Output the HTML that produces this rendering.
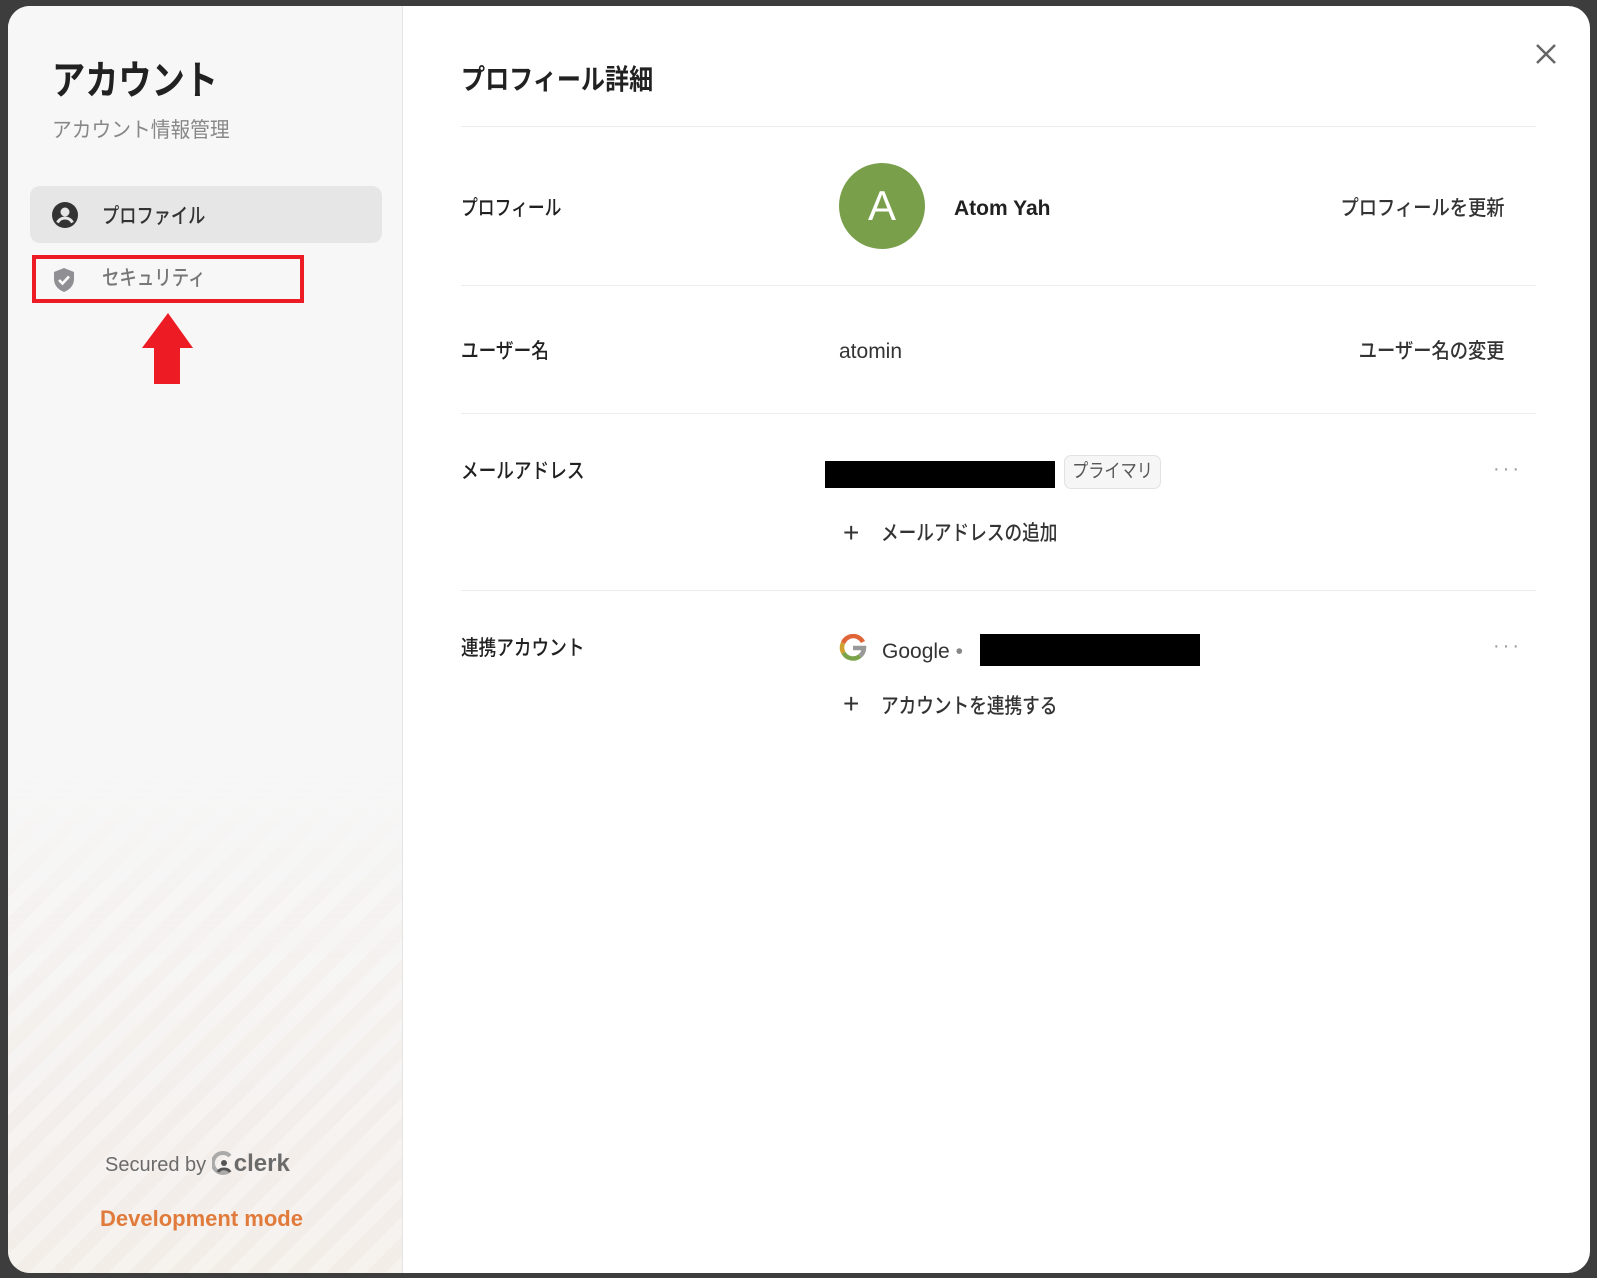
<!DOCTYPE html>
<html><head><meta charset="utf-8"><style>
*{margin:0;padding:0;box-sizing:border-box}
body{width:1597px;height:1278px;background:#3d3d3d;position:relative;overflow:hidden;font-family:"Liberation Sans","Noto Sans CJK JP",sans-serif;color:#212121}
.modal{position:absolute;left:8px;top:6px;width:1582px;height:1267px;border-radius:22px;overflow:hidden;background:#fff}
.side{position:absolute;left:0;top:0;width:395px;height:100%;background:linear-gradient(#f7f7f7 0,#f7f7f7 780px,#f4f1ee 1100px,#f4efeb 100%);border-right:1px solid #e4e4e4}
.stripes{position:absolute;left:0;top:760px;width:100%;height:510px;background:repeating-linear-gradient(-45deg,rgba(255,255,255,.18) 0 14px,rgba(238,225,215,.12) 14px 28px);-webkit-mask-image:linear-gradient(transparent,#000 40%);mask-image:linear-gradient(transparent,#000 40%)}
.abs{position:absolute;white-space:nowrap}
.t{font-size:21px;line-height:1}
.c{display:inline-block;transform:scaleX(.84);transform-origin:left center}
.cr{display:inline-block;transform:scaleX(.87);transform-origin:right center}
.hr{position:absolute;left:461px;width:1075px;height:1px;background:#ececec}
.dots{position:absolute;font-size:20px;color:#999;letter-spacing:3px}
</style></head><body>
<div class="modal">
 <div class="side">
  <div class="stripes"></div>
  <div class="abs" style="left:44px;top:42px;font-size:40px;font-weight:700;color:#212121"><span class="c" style="transform:scaleX(.83)">アカウント</span></div>
  <div class="abs" style="left:44px;top:108px;font-size:21px;color:#888"><span class="c" style="transform:scaleX(.94)">アカウント情報管理</span></div>
  <div class="abs" style="left:22px;top:180px;width:352px;height:57px;background:#e6e6e6;border-radius:10px"></div>
  <svg class="abs" style="left:44px;top:196px" width="26" height="26" viewBox="0 0 26 26"><circle cx="13" cy="13" r="13" fill="#333"/><circle cx="13" cy="10" r="4.5" fill="#e6e6e6"/><path d="M5.5 20.5c2-3.5 4.5-4.5 7.5-4.5s5.5 1 7.5 4.5" stroke="#e6e6e6" stroke-width="3" fill="none"/></svg>
  <div class="abs" style="left:94px;top:194px;font-size:21px;font-weight:500;color:#333"><span class="c" style="transform:scaleX(.82)">プロファイル</span></div>
  <svg class="abs" style="left:45px;top:261px" width="22" height="26" viewBox="0 0 22 26"><path d="M11 1 L21 5 V12 C21 19 16 23 11 25 C6 23 1 19 1 12 V5 Z" fill="#8f8f94"/><path d="M6 13 L9.5 16.5 L16 9.5" stroke="#fff" stroke-width="2.6" fill="none"/></svg>
  <div class="abs" style="left:94px;top:256px;font-size:21px;font-weight:500;color:#777"><span class="c" style="transform:scaleX(.83)">セキュリティ</span></div>
  <div class="abs" style="left:24px;top:249px;width:272px;height:48px;border:4px solid #ed1c24"></div>
  <svg class="abs" style="left:134px;top:307px" width="52" height="72" viewBox="0 0 52 72"><path d="M26 0 L51 35 L38 35 L38 71 L12 71 L12 35 L0 35 Z" fill="#ed1c24"/></svg>
  <div class="abs" style="left:97px;top:1144px;font-size:20px;color:#6b6b6b">Secured by <svg width="22" height="24" viewBox="0 0 22 24" style="vertical-align:-4px"><path d="M18 5 A10 10 0 1 0 18 19" stroke="#aaa" stroke-width="4" fill="none"/><circle cx="12" cy="12" r="3" fill="#555"/><path d="M6 21 C8 17 16 17 18 21" stroke="#555" stroke-width="3" fill="none"/></svg><span style="font-size:24px;font-weight:700;color:#6b6b6b">clerk</span></div>
  <div class="abs" style="left:92px;top:1200px;font-size:22px;font-weight:700;color:#e07b3c">Development mode</div>
 </div>
 <svg class="abs" style="left:1527px;top:37px" width="22" height="22" viewBox="0 0 22 22"><path d="M2 2 L20 20 M20 2 L2 20" stroke="#666" stroke-width="2.5"/></svg>
</div>
<div class="abs" style="left:461px;top:58px;font-size:28px;font-weight:700"><span class="c" style="transform:scaleX(.86)">プロフィール詳細</span></div>
<div class="hr" style="top:126px"></div>
<div class="abs t" style="left:461px;top:198px;font-weight:500"><span class="c" style="transform:scaleX(.8)">プロフィール</span></div>
<div class="abs" style="left:839px;top:163px;width:86px;height:86px;border-radius:50%;background:#799f4b;color:#fff;font-size:42px;text-align:center;line-height:86px">A</div>
<div class="abs t" style="left:954px;top:198px;font-weight:700">Atom Yah</div>
<div class="abs t" style="right:92px;top:198px;font-weight:500;color:#333"><span class="cr">プロフィールを更新</span></div>
<div class="hr" style="top:285px"></div>
<div class="abs t" style="left:461px;top:341px;font-weight:500"><span class="c">ユーザー名</span></div>
<div class="abs t" style="left:839px;top:341px;color:#333">atomin</div>
<div class="abs t" style="right:92px;top:341px;font-weight:500;color:#333"><span class="cr">ユーザー名の変更</span></div>
<div class="hr" style="top:413px"></div>
<div class="abs t" style="left:461px;top:461px;font-weight:500"><span class="c">メールアドレス</span></div>
<div class="abs" style="left:825px;top:461px;width:230px;height:27px;background:#000"></div>
<div class="abs" style="left:1064px;top:455px;width:97px;height:34px;border:1px solid #e2e2e2;border-radius:7px;background:#f6f6f6;font-size:19px;color:#555;text-align:center;line-height:32px"><span style="display:inline-block;transform:scaleX(.85)">プライマリ</span></div>
<div class="dots" style="left:1493px;top:458px">···</div>
<div class="abs" style="left:843px;top:519px;font-size:28px;font-weight:300;line-height:28px;color:#333">+</div>
<div class="abs t" style="left:881px;top:523px;font-weight:500;color:#333"><span class="c">メールアドレスの追加</span></div>
<div class="hr" style="top:590px"></div>
<div class="abs t" style="left:461px;top:638px;font-weight:500"><span class="c">連携アカウント</span></div>
<svg class="abs" style="left:839px;top:634px" width="28" height="28" viewBox="0 0 28 28"><path d="M24 8 A11 11 0 0 0 4 9" stroke="#e0663a" stroke-width="4.5" fill="none"/><path d="M4 9 A11 11 0 0 0 4.5 19" stroke="#d0a030" stroke-width="4.5" fill="none"/><path d="M4.5 19 A11 11 0 0 0 21 22" stroke="#7aa34a" stroke-width="4.5" fill="none"/><path d="M21 22 A11 11 0 0 0 25 14 H14" stroke="#999" stroke-width="4.5" fill="none"/></svg>
<div class="abs t" style="left:882px;top:641px;color:#333">Google <span style="color:#888">•</span></div>
<div class="abs" style="left:980px;top:634px;width:220px;height:32px;background:#000"></div>
<div class="dots" style="left:1493px;top:635px">···</div>
<div class="abs" style="left:843px;top:690px;font-size:28px;font-weight:300;line-height:28px;color:#333">+</div>
<div class="abs t" style="left:881px;top:696px;font-weight:500;color:#333"><span class="c">アカウントを連携する</span></div>
</body></html>
